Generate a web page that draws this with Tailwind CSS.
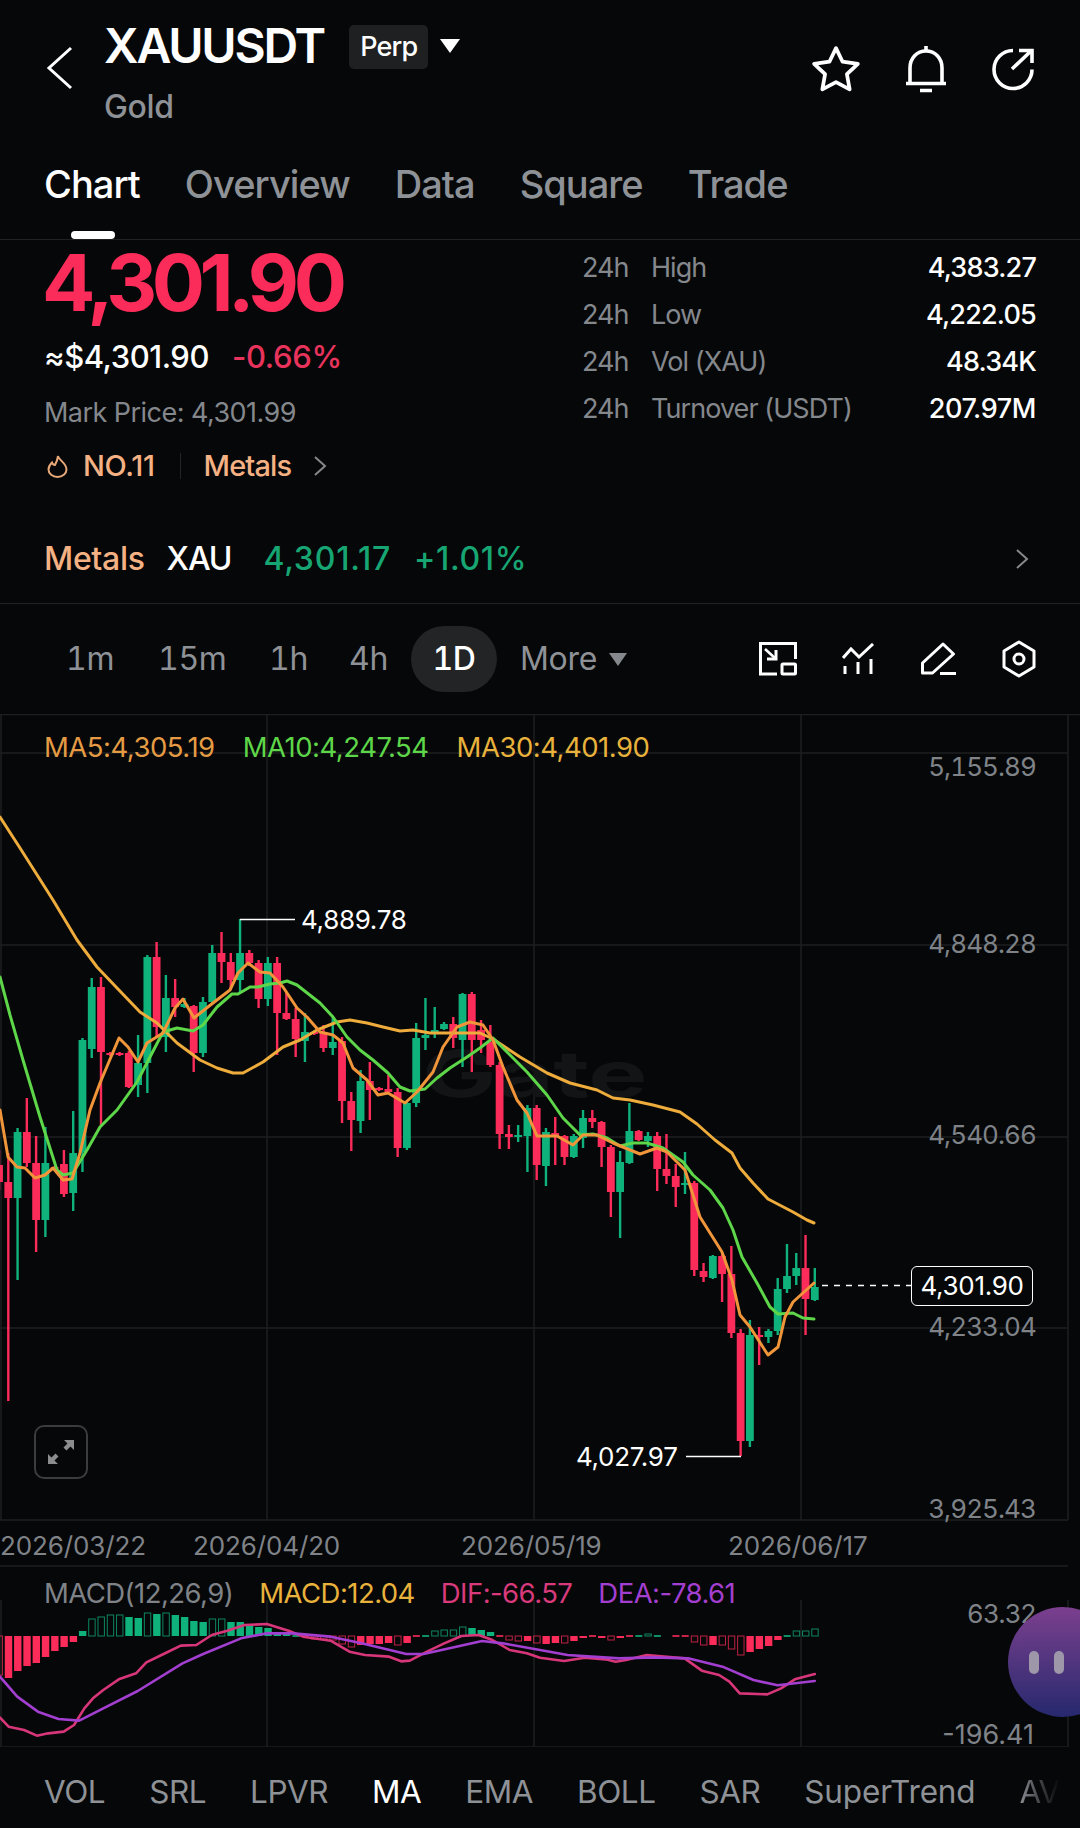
<!DOCTYPE html>
<html lang="en">
<head>
<meta charset="UTF-8">
<title>XAUUSDT Chart</title>
<script src="https://cdn.jsdelivr.net/npm/@tailwindcss/browser@4"></script>
</head>
<body class="bg-[#060708]">
<div class="w-[1080px] h-[1828px] overflow-hidden flex flex-col font-['Inter',sans-serif] text-white tracking-[-0.02em]">

  <!-- header -->
  <header class="h-[140px] flex items-start shrink-0 relative">
    <svg class="mt-[46px] ml-[46px] w-[28px] h-[44px]" viewBox="0 0 28 44" fill="none" stroke="white" stroke-width="3"><path d="M25 2 3 22l22 20"/></svg>
    <div class="ml-[30px] mt-[17px]">
      <div class="flex items-center h-[58px]">
        <span class="text-[48px] leading-[58px] font-semibold tracking-[-0.045em]">XAUUSDT</span>
        <span class="ml-[25px] mt-[2px] h-[44px] px-[11px] flex items-center bg-[#1f2021] rounded-[5px] text-[27px] font-medium tracking-[-0.03em]">Perp</span>
        <svg class="ml-[12px] w-[20px] h-[14px]" viewBox="0 0 20 14" fill="white"><path d="M0 0h20L10 14z"/></svg>
      </div>
      <div class="mt-[14px] text-[32px] leading-[36px] text-[#8e9297] font-medium">Gold</div>
    </div>
    <div class="ml-auto mr-[47px] mt-[44px] flex items-center gap-[44px]">
      <svg class="w-[50px] h-[50px]" viewBox="0 0 48 48" fill="none" stroke="white" stroke-width="3.6" stroke-linejoin="round"><path d="M24 4l6.300 13 14.700 2-10.500 10 2.600 14.500L24 36.600 10.900 43.500 13.500 29 3 19l14.700-2z"/></svg>
      <svg class="w-[42px] h-[48px]" viewBox="0 0 42 48" fill="none" stroke="white" stroke-width="3.6"><path d="M5 38V23C5 13 12 6 21 6s16 7 16 17v15"/><path d="M1 38.500h40M15 45.500h12M21 1v5"/></svg>
      <svg class="w-[44px] h-[44px] mr-[-2px]" viewBox="0 0 44 44" fill="none" stroke="white" stroke-width="3.6"><path d="M22 3.500a19 19 0 1 0 19 19"/><path d="M21 22 40 4M28 3.500h13V16"/></svg>
    </div>
  </header>

  <!-- tabs -->
  <nav class="h-[100px] shrink-0 border-b border-[#1f2123] flex items-start pl-[44px] gap-[45px] text-[38px] leading-[44px] font-medium text-[#8e9297] relative tracking-[-0.025em]">
    <span class="mt-[22px] text-white">Chart</span>
    <span class="mt-[22px]">Overview</span>
    <span class="mt-[22px]">Data</span>
    <span class="mt-[22px]">Square</span>
    <span class="mt-[22px]">Trade</span>
    <span class="absolute left-[71px] top-[91px] w-[44px] h-[8px] rounded-full bg-white"></span>
  </nav>

  <!-- stats -->
  <section class="h-[364px] shrink-0 border-b border-[#1f2123] px-[44px]">
    <div class="flex h-[266px]">
      <div class="w-[538px]">
        <div class="text-[79px] leading-[76px] mt-[4px] ml-[-2px] font-bold text-[#fb2b5a] tracking-[-0.07em]">4,301.90</div>
        <div class="mt-[19px] flex items-center text-[31px] leading-[36px] font-medium">
          <span class="tracking-[-0.015em]">≈$4,301.90</span><span class="ml-[23px] text-[#e8335c]">-0.66%</span>
        </div>
        <div class="mt-[21px] text-[27px] leading-[34px] text-[#84888d] tracking-[-0.02em]">Mark Price: 4,301.99</div>
        <div class="mt-[18px] flex items-center text-[29px] leading-[36px] font-medium text-[#f4b183]">
          <svg class="ml-[3px] w-[21px] h-[24px]" viewBox="0 0 21 24" fill="none" stroke="#e8a878" stroke-width="2"><path d="M11 2c.5 4 8.500 7 8.500 13.500a9 7.500 0 0 1-18 0c0-3 1.500-5 3.500-7 .5 1.500 1.500 2.500 3 2.500 1.500-2.500 2.500-5.500 3-9z"/></svg>
          <span class="ml-[15px]">NO.11</span>
          <span class="ml-[25px] w-px h-[26px] bg-[#222426]"></span>
          <span class="ml-[23px] tracking-[-0.03em]">Metals</span>
          <svg class="ml-[22px] w-[14px] h-[22px]" viewBox="0 0 14 22" fill="none" stroke="#85888c" stroke-width="2"><path d="M2 2l10 9-10 9"/></svg>
        </div>
      </div>
      <div class="flex-1 mt-[5px] text-[27px] tracking-[-0.035em]">
        <div class="h-[47px] flex items-center text-[#84888d]"><span class="w-[69px]">24h</span><span>High</span><span class="ml-auto text-white font-medium tracking-[-0.03em]">4,383.27</span></div>
        <div class="h-[47px] flex items-center text-[#84888d]"><span class="w-[69px]">24h</span><span>Low</span><span class="ml-auto text-white font-medium tracking-[-0.03em]">4,222.05</span></div>
        <div class="h-[47px] flex items-center text-[#84888d]"><span class="w-[69px]">24h</span><span>Vol (XAU)</span><span class="ml-auto text-white font-medium tracking-[-0.03em]">48.34K</span></div>
        <div class="h-[47px] flex items-center text-[#84888d]"><span class="w-[69px]">24h</span><span>Turnover (USDT)</span><span class="ml-auto text-white font-medium tracking-[-0.015em]">207.97M</span></div>
      </div>
    </div>
    <div class="flex items-center h-[40px] mt-[33px] text-[32px] font-medium">
      <span class="text-[#f4b183]">Metals</span>
      <span class="ml-[22px] tracking-[-0.035em]">XAU</span>
      <span class="ml-[32px] text-[#17a673] tracking-[0.025em]">4,301.17</span>
      <span class="ml-[23px] text-[#17a673] tracking-[0.02em]">+1.01%</span>
      <svg class="ml-auto mr-[7px] w-[14px] h-[22px]" viewBox="0 0 14 22" fill="none" stroke="#85888c" stroke-width="2"><path d="M2 2l10 9-10 9"/></svg>
    </div>
  </section>

  <!-- timeframes -->
  <section class="h-[110px] shrink-0 flex items-center text-[32px] text-[#8e9297] relative tabular-nums">
    <span class="ml-[66px] w-[45px] text-center">1m</span>
    <span class="ml-[47px] w-[64px] text-center">15m</span>
    <span class="ml-[47px] w-[36px] text-center">1h</span>
    <span class="ml-[44px] w-[37px] text-center">4h</span>
    <span class="ml-[25px] w-[86px] h-[66px] rounded-full bg-[#232425] text-white font-medium flex items-center justify-center">1D</span>
    <span class="ml-[23px] w-[75px]">More</span>
    <svg class="ml-[14px] w-[18px] h-[13px]" viewBox="0 0 18 13" fill="#85888c"><path d="M0 0h18L9 13z"/></svg>
    <div class="ml-auto mr-[44px] flex items-center gap-[45px]">
      <svg class="w-[38px] h-[34px]" viewBox="0 0 38 34" fill="none" stroke="white" stroke-width="3"><path d="M18 32H1.500V1.500h35V17"/><rect x="23" y="22" width="13.500" height="10" rx="1"/><path d="M6 7l11 10" stroke-width="2.600"/><path d="M17 8v9H8" stroke-width="3"/></svg>
      <svg class="w-[34px] h-[32px]" viewBox="0 0 34 32" fill="none" stroke="white" stroke-width="3"><path d="M1 15l8-9 8 8L31 1"/><path d="M3 23v8M16 19v12M29 16v15"/></svg>
      <svg class="w-[36px] h-[34px]" viewBox="0 0 36 34" fill="none" stroke="white" stroke-width="3" stroke-linejoin="round"><path d="M1.500 31V21L22 2l10.500 10-21 19z"/><path d="M19 31.500h16"/></svg>
      <svg class="w-[34px] h-[38px]" viewBox="0 0 34 38" fill="none" stroke="white" stroke-width="3" stroke-linejoin="round"><path d="M17 2l15 9v16l-15 9-15-9V11z"/><circle cx="17" cy="19" r="5"/></svg>
    </div>
  </section>

  <!-- chart + macd -->
  <section class="relative h-[1033px] shrink-0 text-[26px] leading-[32px] text-[#7f8388]">
    <svg id="chart" class="absolute inset-0 w-[1080px] h-[1033px]" viewBox="0 714 1080 1033"></svg>

    <div class="absolute left-[44px] top-[17px] flex gap-[28px] text-[27.500px] tracking-[-0.018em]">
      <span class="text-[#e49b44]">MA5:4,305.19</span>
      <span class="text-[#5ed649]">MA10:4,247.54</span>
      <span class="text-[#e8b23c]">MA30:4,401.90</span>
    </div>

    <span class="absolute right-[44px] top-[37px] tabular-nums tracking-[-0.035em]">5,155.89</span>
    <span class="absolute right-[44px] top-[214px] tabular-nums tracking-[-0.035em]">4,848.28</span>
    <span class="absolute right-[44px] top-[405px] tabular-nums tracking-[-0.035em]">4,540.66</span>
    <span class="absolute right-[44px] top-[597px] tabular-nums tracking-[-0.035em]">4,233.04</span>
    <span class="absolute right-[44px] top-[779px] tabular-nums tracking-[-0.035em]">3,925.43</span>

    <span class="absolute left-[301px] top-[190px] text-white">4,889.78</span>
    <span class="absolute left-[576px] top-[727px] text-white">4,027.97</span>

    <span class="absolute left-[911px] top-[552px] w-[122px] h-[40px] rounded-[6px] border border-white bg-[#060708] text-white flex items-center justify-center">4,301.90</span>

    <!-- fullscreen button -->
    <div class="absolute left-[34px] top-[711px] w-[54px] h-[54px] rounded-[10px] border-2 border-[#3a3c3e] flex items-center justify-center">
      <svg class="w-[28px] h-[26px]" viewBox="0 0 28 26" fill="#8a8c8e"><path d="M17 1h10v10l-3.500-3.500-4 4-3-3 4-4zM1 25V15l3.500 3.500 4-4 3 3-4 4L11 25z"/></svg>
    </div>

    <span class="absolute left-0 top-[816px] tracking-[-0.005em]">2026/03/22</span>
    <span class="absolute left-[193px] top-[816px] tracking-[-0.005em]">2026/04/20</span>
    <span class="absolute left-[461px] top-[816px] tracking-[-0.005em]">2026/05/19</span>
    <span class="absolute left-[728px] top-[816px] tracking-[-0.005em]">2026/06/17</span>

    <div class="absolute left-[44px] top-[863px] flex gap-[26px] text-[27.500px] tracking-[-0.02em]">
      <span>MACD(12,26,9)</span>
      <span class="text-[#e8b23c]">MACD:12.04</span>
      <span class="text-[#d83a7c]">DIF:-66.57</span>
      <span class="text-[#a33fd0]">DEA:-78.61</span>
    </div>
    <span class="absolute right-[44px] top-[884px]">63.32</span>
    <span class="absolute right-[46px] top-[1005px] text-[27px] tracking-normal">-196.41</span>

    <!-- floating assistant -->
    <div class="absolute left-[1008px] top-[893px] w-[72px] h-[110px] overflow-hidden">
      <div class="w-[110px] h-[110px] rounded-full bg-gradient-to-b from-[#7b3f8e] to-[#26286e] flex items-center gap-[15px] pl-[21px]">
        <span class="w-[10px] h-[23px] rounded-full bg-[#9d97a9]"></span>
        <span class="w-[10px] h-[23px] rounded-full bg-[#9d97a9]"></span>
      </div>
    </div>
  </section>

  <!-- indicator tabs -->
  <nav class="h-[81px] shrink-0 flex items-start pl-[44px] gap-[44px] text-[31.500px] leading-[36px] tracking-[-0.015em] text-[#8e9297] relative">
    <span class="mt-[27px]">VOL</span>
    <span class="mt-[27px]">SRL</span>
    <span class="mt-[27px]">LPVR</span>
    <span class="mt-[27px] text-white">MA</span>
    <span class="mt-[27px]">EMA</span>
    <span class="mt-[27px]">BOLL</span>
    <span class="mt-[27px]">SAR</span>
    <span class="mt-[27px] tracking-[-0.005em]">SuperTrend</span>
    <span class="mt-[27px] bg-gradient-to-r from-[#8e9297] to-[#060708] bg-clip-text text-transparent">AV</span>
  </nav>
</div>

<script>
  const RED = "#fb2b5a", GREEN = "#10b27c";
  const svg = document.getElementById("chart");
  let out = "";

  const xOf = i => 8.3 + 9.27 * i;

  // grid
  const grid = "#1d1f21";
  out += `<path d="M0 714.500H1080" stroke="${grid}" stroke-width="1.500"/>`;
  [753, 945, 1137, 1328, 1520, 1566, 1747].forEach(y => {
    out += `<path d="M0 ${y}H1068" stroke="${grid}" stroke-width="1.500"/>`;
  });
  [1, 267, 534, 801, 1068].forEach(x => {
    out += `<path d="M${x} 714V1520M${x} 1600V1747" stroke="${grid}" stroke-width="1.500"/>`;
  });

  // watermark
  out += `<text x="422" y="1097" font-size="64" font-weight="700" font-family="Inter" fill="#131415" textLength="225" lengthAdjust="spacingAndGlyphs">Gate</text>`;

  // candles: i, colour, wick top, body top, body bottom, wick bottom
  const r = 1, g = 0;
  const candles = [
    [-1,r,1150,1165,1182,1190],[0,r,1153,1182,1198,1401],[1,g,1128,1132,1198,1280],[2,r,1098,1132,1163,1167],
    [3,r,1136,1163,1220,1252],[4,g,1127,1163,1220,1237],[5,r,1166,1167,1169,1170],[6,r,1150,1164,1194,1197],
    [7,g,1111,1153,1193,1211],[8,g,1038,1040,1152,1172],[9,g,978,987,1049,1058],[10,r,977,987,1052,1125],
    [11,r,1052,1053,1055,1056],[12,r,1052,1053,1055,1056],[13,r,1051,1053,1087,1088],[14,g,1035,1063,1085,1097],
    [15,g,955,957,1063,1093],[16,r,942,957,1027,1037],[17,g,975,998,1037,1052],[18,r,979,998,1007,1017],
    [19,g,998,1004,1007,1008],[20,r,1005,1006,1053,1072],[21,g,997,1002,1053,1057],[22,g,945,953,1002,1003],
    [23,r,932,953,962,983],[24,r,953,962,980,988],[25,g,919,953,980,992],[26,r,950,953,963,966],
    [27,r,960,963,999,1008],[28,g,957,963,999,1006],[29,r,957,963,1013,1055],[30,r,993,1013,1019,1020],
    [31,r,1008,1019,1039,1057],[32,g,1013,1032,1041,1062],[33,r,1031,1032,1034,1035],[34,r,1025,1032,1048,1052],
    [35,g,1018,1042,1048,1055],[36,r,1037,1041,1101,1123],[37,r,1092,1101,1120,1151],[38,g,1070,1081,1121,1133],
    [39,r,1062,1081,1090,1120],[40,r,1087,1088,1090,1091],[41,r,1075,1089,1092,1093],[42,r,1088,1092,1148,1157],
    [43,g,1102,1103,1148,1150],[44,g,1023,1038,1103,1107],[45,g,998,1035,1038,1050],[46,g,1007,1030,1033,1038],
    [47,g,1022,1024,1029,1030],[48,r,1017,1024,1038,1048],[49,g,993,994,1040,1067],[50,r,992,994,1040,1072],
    [51,r,1020,1030,1040,1053],[52,r,1025,1042,1065,1067],[53,r,1062,1065,1134,1149],[54,r,1125,1134,1137,1149],
    [55,g,1125,1135,1137,1142],[56,g,1105,1108,1136,1172],[57,r,1105,1108,1165,1180],[58,g,1128,1132,1166,1186],
    [59,r,1117,1133,1137,1165],[60,r,1135,1136,1157,1165],[61,g,1134,1136,1157,1158],[62,g,1110,1118,1138,1148],
    [63,r,1110,1118,1122,1128],[64,r,1121,1122,1147,1167],[65,r,1145,1147,1192,1217],[66,g,1151,1162,1192,1238],
    [67,g,1103,1131,1163,1164],[68,r,1130,1131,1140,1141],[69,g,1132,1136,1141,1147],[70,r,1132,1136,1169,1191],
    [71,r,1134,1169,1176,1184],[72,r,1164,1176,1187,1207],[73,g,1152,1183,1185,1194],[74,r,1181,1183,1270,1276],
    [75,r,1263,1271,1277,1282],[76,g,1255,1256,1278,1279],[77,r,1253,1256,1274,1302],[78,r,1246,1274,1333,1338],
    [79,r,1329,1333,1441,1456],[80,g,1320,1335,1441,1447],[81,r,1327,1335,1337,1365],[82,g,1329,1331,1337,1343],
    [83,g,1278,1289,1331,1335],[84,g,1244,1276,1289,1293],[85,g,1253,1268,1276,1285],[86,r,1235,1268,1299,1335],
    [87,g,1268,1287,1300,1301]
  ];
  candles.forEach(([i, c, wt, bt, bb, wb]) => {
    const x = xOf(i), col = c ? RED : GREEN;
    out += `<rect x="${x - 1.2}" y="${wt}" width="2.400" height="${wb - wt}" fill="${col}"/>`;
    out += `<rect x="${x - 3.9}" y="${bt}" width="7.800" height="${bb - bt}" fill="${col}"/>`;
  });

  const line = (pts, col, w) => {
    out += `<polyline points="${pts.map(p => p.join(",")).join(" ")}" fill="none" stroke="${col}" stroke-width="${w}" stroke-linejoin="round" stroke-linecap="round"/>`;
  };

  // moving averages
  const ma30 = [[0,817],[20,848],[53,900],[77,940],[97,967],[117,988],[140,1012],[157,1023],[177,1043],[200,1060],[217,1068],[233,1073],[243,1073],[263,1062],[283,1047],[300,1040],[317,1030],[337,1022],[350,1020],[367,1023],[383,1027],[400,1031],[413,1030],[430,1033],[453,1033],[480,1033],[493,1039],[520,1057],[547,1073],[570,1083],[597,1090],[613,1098],[630,1100],[653,1105],[680,1112],[697,1124],[715,1140],[732,1153],[740,1168],[753,1183],[768,1199],[793,1212],[807,1220],[814,1223]];
  const ma10 = [[0,977],[10,1015],[23,1060],[40,1117],[57,1170],[63,1175],[73,1173],[87,1150],[100,1127],[117,1110],[137,1082],[150,1057],[163,1032],[177,1028],[193,1031],[203,1025],[217,1007],[232,994],[238,994],[250,987],[258,987],[270,984],[280,983],[287,981],[297,985],[320,1003],[333,1017],[347,1037],[360,1050],[373,1060],[388,1073],[400,1087],[410,1091],[425,1089],[437,1078],[450,1068],[467,1057],[480,1048],[493,1038],[507,1052],[527,1072],[547,1095],[563,1118],[580,1135],[593,1134],[607,1138],[620,1146],[633,1143],[647,1143],[663,1148],[683,1162],[693,1175],[710,1190],[723,1208],[733,1230],[742,1257],[757,1283],[770,1307],[778,1314],[793,1313],[803,1318],[814,1319]];
  const ma5 = [[0,1110],[8,1157],[17,1167],[25,1168],[35,1178],[45,1175],[53,1168],[63,1180],[72,1179],[80,1153],[90,1110],[100,1083],[119,1038],[128,1047],[138,1062],[147,1043],[163,1033],[175,1008],[183,999],[194,1018],[213,1003],[230,990],[238,973],[248,963],[260,972],[270,973],[283,987],[297,1008],[307,1017],[320,1032],[333,1035],[343,1043],[353,1068],[367,1080],[378,1095],[388,1093],[405,1103],[417,1092],[433,1072],[443,1047],[457,1027],[470,1022],[483,1025],[493,1040],[503,1067],[517,1100],[527,1113],[537,1136],[557,1136],[573,1145],[583,1135],[597,1135],[613,1143],[640,1154],[657,1148],[667,1152],[685,1170],[700,1217],[722,1252],[732,1280],[740,1315],[750,1327],[768,1355],[778,1347],[785,1317],[793,1302],[814,1283]];
  line(ma30, "#eeac3c", 3);
  line(ma10, "#5ed649", 3);
  line(ma5, "#f0953a", 3);

  // high / low / last callouts
  out += `<path d="M240 919.500H295" stroke="white" stroke-width="1.500" fill="none"/>`;
  out += `<path d="M686 1456.500H741" stroke="white" stroke-width="1.500" fill="none"/>`;
  out += `<path d="M822 1285.500H911" stroke="white" stroke-width="1.500" stroke-dasharray="6 6" fill="none"/>`;

  // macd histogram, zero at y=1636: [value px, hollow]
  const zero = 1636;
  const macd = [[-39,1],[-42],[-35],[-30],[-27],[-21],[-15],[-11],[-6],[5],[17,1],[19,1],[21,1],[21,1],[19],[18],[23,1],[22],[23,1],[21],[19],[15],[14],[17,1],[17,1],[14],[14],[11],[9],[8],[4],[3],[1],[-1],[-3,1],[-3,1],[-4,1],[-8,1],[-11,1],[-9],[-8],[-8],[-7],[-9,1],[-7],[-1],[1],[5,1],[6,1],[6,1],[9,1],[8],[6],[4],[-1],[-4,1],[-5,1],[-5],[-7,1],[-8],[-7],[-7,1],[-5],[-2],[-1],[-2],[-4,1],[-2],[-1],[1],[2,1],[1],[0],[-1],[-1],[-6,1],[-9,1],[-9],[-9,1],[-13,1],[-19,1],[-16],[-13],[-10],[-4],[1],[5,1],[5,1],[7,1]];
  macd.forEach(([v, hollow], k) => {
    if (!v) return;
    const x = xOf(k - 1) + 0.2, col = v < 0 ? RED : GREEN, h = Math.abs(v), y = v < 0 ? zero : zero - h;
    if (h <= 1) out += `<rect x="${x - 3.5}" y="${zero - 1}" width="7" height="2" fill="${col}" opacity=".8"/>`;
    else if (hollow) out += `<rect x="${x - 3.2}" y="${y}" width="6.400" height="${h}" fill="none" stroke="${col}" stroke-width="1" opacity=".75"/>`;
    else out += `<rect x="${x - 3.7}" y="${y}" width="7.400" height="${h}" fill="${col}"/>`;
  });

  const z9 = ([x, y]) => [x / 2.904, 1500 + y / 3];
  const z10 = ([x, y]) => [540 + x / 2.904, 1500 + y / 3];
  const dif = [[0,653],[25,680],[70,690],[107,707],[140,700],[185,695],[215,675],[245,625],[270,595],[300,570],[345,538],[395,520],[425,487],[475,462],[525,437],[570,435],[615,405],[660,392],[710,375],[775,372],[840,393],[880,410],[960,422],[1015,455],[1060,465],[1130,470],[1165,484],[1190,482],[1240,455],[1290,430],[1340,408],[1390,405],[1430,420],[1480,450],[1530,460]].map(z9)
    .concat([[0,473],[70,483],[130,473],[190,478],[220,485],[250,480],[310,465],[420,475],[470,512],[520,525],[550,545],[580,580],[660,583],[700,565],[740,538],[798,522]].map(z10));
  const dea = [[0,530],[50,590],[110,635],[170,657],[230,662],[300,625],[400,573],[530,490],[590,462],[700,415],[775,400],[850,400],[960,410],[1050,430],[1180,462],[1230,462],[1400,423],[1460,430]].map(z9)
    .concat([[0,450],[80,465],[150,470],[230,475],[330,472],[430,475],[530,500],[620,540],[690,556],[798,543]].map(z10));
  line(dif, "#d8367a", 2.6);
  line(dea, "#a33fd0", 2.6);

  svg.innerHTML = out;
</script>
</body>
</html>
